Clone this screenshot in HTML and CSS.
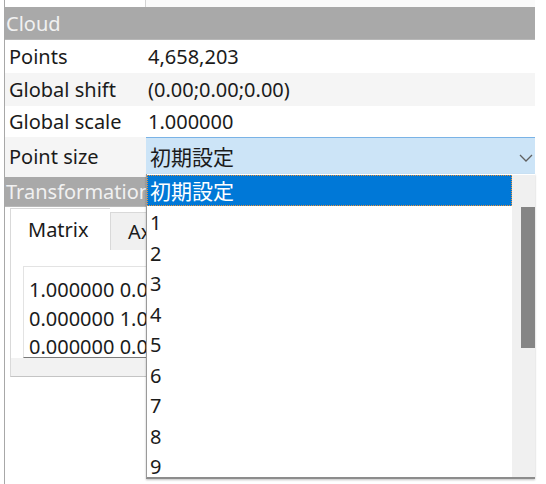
FILE: index.html
```html
<!DOCTYPE html>
<html>
<head>
<meta charset="utf-8">
<link rel="stylesheet" href="styles.css">
</head>
<body>
<div class="panel">
  <div class="topstrip"><div class="tcell"></div><div class="tcell2"></div></div>
  <div class="section">Cloud</div>
  <div class="row"><div class="lbl">Points</div><div class="val">4,658,203</div></div>
  <div class="row alt"><div class="lbl">Global shift</div><div class="val">(0.00;0.00;0.00)</div></div>
  <div class="row short"><div class="lbl">Global scale</div><div class="val">1.000000</div></div>
  <div class="row alt tall">
    <div class="lbl">Point size</div>
    <div class="combo"><span class="cjk">初期設定</span>
      <svg class="chev" width="14" height="8" viewBox="0 0 14 8"><path d="M1 1 L7 7 L13 1" fill="none" stroke="#606060" stroke-width="1.3"/></svg>
    </div>
  </div>
  <div class="section sec2">Transformation</div>
  <div class="tabs">
    <div class="tab active">Matrix</div>
    <div class="tab">Axis/Angle</div>
  </div>
  <div class="pane">
    <div class="matrix">
      <div>1.000000 0.000000 0.000000</div>
      <div>0.000000 1.000000 0.000000</div>
      <div>0.000000 0.000000 1.000000</div>
    </div>
    <div class="hscroll"></div>
  </div>

  <div class="dropdown">
    <div class="list">
      <div class="item sel"><span class="cjk">初期設定</span></div>
      <div class="rest">
        <div class="item">1</div>
        <div class="item">2</div>
        <div class="item">3</div>
        <div class="item">4</div>
        <div class="item">5</div>
        <div class="item">6</div>
        <div class="item">7</div>
        <div class="item">8</div>
        <div class="item">9</div>
      </div>
    </div>
    <div class="vscroll"><div class="thumb"></div></div>
  </div>
</div>
</body>
</html>
```
FILE: styles.css
```css
html, body {
  margin: 0;
  padding: 0;
  background: #ffffff;
}
body {
  font-family: "Noto Sans", "Open Sans", sans-serif;
  font-size: 20px;
  color: #1b1b1b;
  width: 546px;
  height: 484px;
  overflow: hidden;
}
.panel {
  position: relative;
  margin-left: 4px;
  width: 530px;
  height: 484px;
  border-left: 1px solid #a8a8a8;
}
.topstrip {
  display: grid;
  grid-template-columns: 141px 1fr;
  height: 7px;
}
.tcell {
  border-right: 1px solid #d4d4d4;
}
.tcell2 {
  background: #fafafa;
}
.section {
  height: 33px;
  line-height: 33px;
  background: #a9a9a9;
  color: #f1f1f1;
  padding-left: 1px;
  border-bottom: 1px solid #b8b8b8;
  box-sizing: border-box;
}
.sec2 {
  height: 30px;
  line-height: 30px;
}
.row {
  display: grid;
  grid-template-columns: 141px 1fr;
  height: 33px;
  align-items: center;
}
.row.short {
  height: 31px;
}
.row.alt {
  background: #f5f5f5;
}
.row.tall {
  height: 40px;
  align-items: start;
}
.row.tall .lbl {
  line-height: 40px;
}
.lbl {
  padding-left: 4px;
}
.val {
  padding-left: 2px;
}
.cjk {
  font-family: "Noto Sans CJK JP", "Noto Sans", sans-serif;
  font-size: 21px;
}
.combo {
  height: 37px;
  box-sizing: border-box;
  background: #cce4f7;
  border-top: 1px solid #7ab3e6;
  display: flex;
  align-items: center;
  justify-content: space-between;
  padding-left: 4px;
  padding-right: 2px;
}
.chev {
  margin-top: 3px;
}
.tabs {
  display: flex;
  align-items: flex-end;
  height: 43px;
  padding-left: 5px;
}
.tab {
  height: 38px;
  line-height: 38px;
  padding: 0 17px;
  background: #f0f0f0;
  border: 1px solid #d9d9d9;
  border-bottom: none;
  box-sizing: border-box;
  width: 110px;
  white-space: nowrap;
  overflow: hidden;
}
.tab.active {
  background: #ffffff;
  height: 42px;
  line-height: 42px;
  width: 100px;
  border-right: none;
}
.pane {
  margin-left: 5px;
  height: 127px;
  border-left: 1px solid #d9d9d9;
  border-bottom: 1px solid #c4c4c4;
  padding: 16px 0 0 12px;
  box-sizing: border-box;
  display: flex;
  flex-direction: column;
}
.matrix {
  height: 92px;
  border-top: 1px solid #e3e3e3;
  border-left: 1px solid #e3e3e3;
  border-bottom: 1px solid #7a7a7a;
  box-sizing: border-box;
  padding: 9px 0 0 5px;
  line-height: 28.5px;
  white-space: nowrap;
  overflow: hidden;
  background: #ffffff;
}
.hscroll {
  flex: 1;
  margin-left: -12px;
  background: #f2f2f2;
}
.dropdown {
  position: absolute;
  left: 141px;
  top: 174px;
  width: 389px;
  height: 305px;
  background: #ffffff;
  border-left: 1px solid #9a9a9a;
  border-bottom: 2px solid #8c8c8c;
  box-shadow: 0 1px 2px rgba(0,0,0,0.25);
  display: flex;
  padding-top: 1px;
  box-sizing: border-box;
}
.list {
  width: 365px;
}
.rest {
  padding-top: 2px;
}
.item {
  height: 30.5px;
  line-height: 30.5px;
  padding-left: 3px;
  box-sizing: border-box;
}
.item.sel {
  height: 31px;
  background: #0078d7;
  color: #ffffff;
  border: 1px dotted #e8923a;
  padding-left: 2px;
  line-height: 28px;
}
.vscroll {
  flex: 1;
  background: #f0f0f0;
  position: relative;
}
.thumb {
  position: absolute;
  left: 9px;
  right: 0;
  top: 32px;
  height: 141px;
  background: #858585;
}
```
